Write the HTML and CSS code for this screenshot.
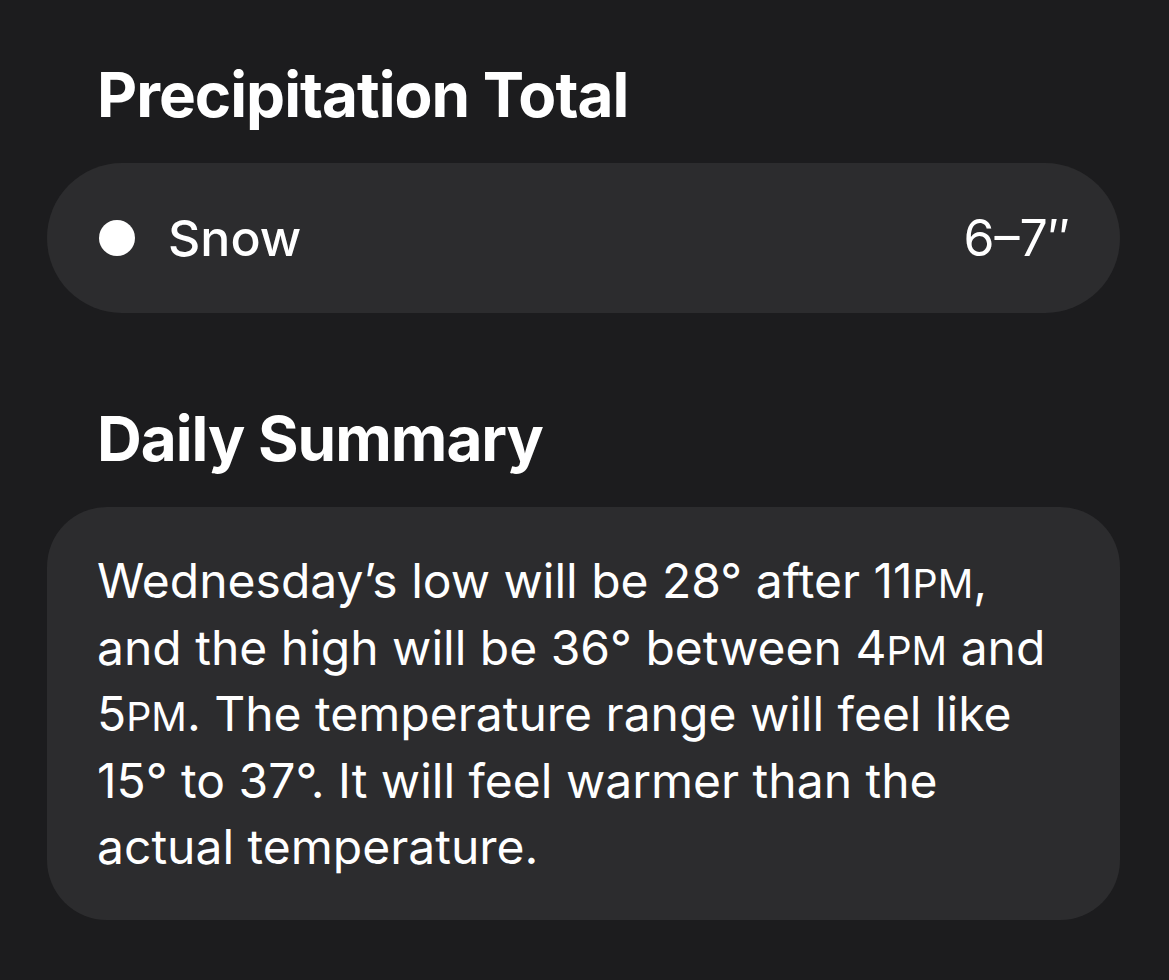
FILE: index.html
```html
<!DOCTYPE html>
<html lang="en">
<head>
  <meta charset="UTF-8">
  <meta name="viewport" content="width=device-width, initial-scale=1.0">
  <title>Weather – Wednesday</title>
  <link rel="stylesheet" href="styles.css">
</head>
<body>
  <div class="page">
    <!-- Precipitation -->
    <section class="section">
      <h2 class="section-title">Precipitation Total</h2>
      <div class="card precip-row">
        <span class="dot"></span>
        <span class="precip-name">Snow</span>
        <span class="precip-value">6–7″</span>
      </div>
    </section>

    <!-- Summary -->
    <section class="section">
      <h2 class="section-title">Daily Summary</h2>
      <div class="card summary">
        <p>Wednesday’s low will be 28° after 11<span class="sc">PM</span>,<br>
        and the high will be 36° between 4<span class="sc">PM</span> and<br>
        5<span class="sc">PM</span>. The temperature range will feel like<br>
        15° to 37°. It will feel warmer than the<br>
        actual temperature.</p>
      </div>
    </section>
  </div>
</body>
</html>
```

FILE: styles.css
```css
body {
  margin: 0;
  background-color: #1c1c1e;
  color: #fff;
  font-family: Inter, "Noto Sans", sans-serif;
}

.page {
  padding: 58px 49px 60px 47px;
  display: flex;
  flex-direction: column;
  gap: 89px;
}

.section {
  display: flex;
  flex-direction: column;
  gap: 31px;
}

.section-title {
  margin: 0;
  padding-left: 50px;
  font-size: 62px;
  line-height: 74px;
  font-weight: 700;
  letter-spacing: -1px;
}

.card {
  background-color: #2c2c2e;
}

/* Precipitation row */
.precip-row {
  height: 150px;
  border-radius: 75px;
  padding: 0 50px 0 52px;
  display: flex;
  align-items: center;
}

.dot {
  width: 36px;
  height: 36px;
  border-radius: 50%;
  background: #fff;
  margin-right: 33px;
}

.precip-name,
.precip-value {
  font-size: 50px;
  font-weight: 500;
}

.precip-value {
  margin-left: auto;
  font-weight: 400;
}

/* Summary text */
.summary {
  border-radius: 60px;
  padding: 41px 50px 39px;
}

.summary p {
  margin: 0;
  font-size: 48px;
  line-height: 66.5px;
}

.sc {
  font-size: 0.82em;
  line-height: 0;
}
```
